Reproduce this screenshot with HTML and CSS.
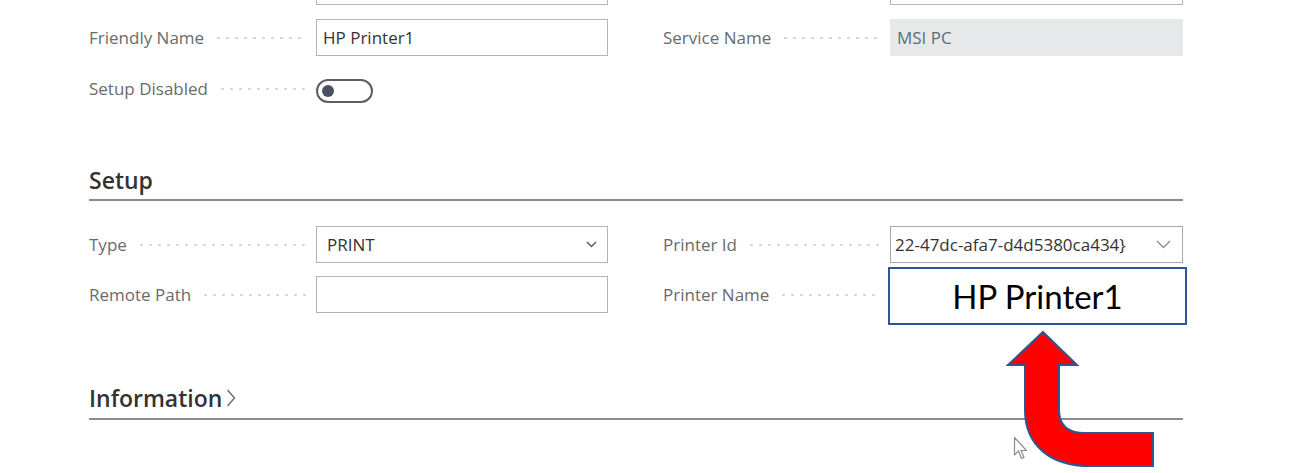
FILE: index.html
```html
<!DOCTYPE html>
<html lang="en">
<head>
  <meta charset="UTF-8">
  <title>Printer Setup</title>
  <link rel="stylesheet" href="styles.css">
</head>
<body>
  <main class="page">

    <section class="group group-general">
      <div class="grid">
        <div class="field">
          <span class="lbl"></span>
          <div class="box"></div>
        </div>
        <div class="field">
          <span class="lbl"></span>
          <div class="box"></div>
        </div>
        <div class="field">
          <span class="lbl">Friendly Name<i class="dots"></i></span>
          <div class="box">HP Printer1</div>
        </div>
        <div class="field">
          <span class="lbl">Service Name<i class="dots"></i></span>
          <div class="box box-readonly">MSI PC</div>
        </div>
        <div class="field">
          <span class="lbl">Setup Disabled<i class="dots"></i></span>
          <div class="toggle"><span class="knob"></span></div>
        </div>
      </div>
    </section>

    <section class="group">
      <h3 class="section-head">Setup</h3>
      <div class="grid">
        <div class="field">
          <span class="lbl">Type<i class="dots"></i></span>
          <div class="box box-select">
            <span>PRINT</span>
            <svg class="chev" width="11" height="7" viewBox="0 0 11 7"><path d="M1 1l4.5 4.5L10 1" fill="none" stroke="#555" stroke-width="1.4"/></svg>
          </div>
        </div>
        <div class="field">
          <span class="lbl">Printer Id<i class="dots"></i></span>
          <div class="box box-select box-id">
            <span>22-47dc-afa7-d4d5380ca434}</span>
            <svg class="chev chev-lg" width="15" height="9" viewBox="0 0 15 9"><path d="M1 1l6.5 6.5L14 1" fill="none" stroke="#8a8a8a" stroke-width="1.3"/></svg>
          </div>
        </div>
        <div class="field">
          <span class="lbl">Remote Path<i class="dots"></i></span>
          <div class="box"></div>
        </div>
        <div class="field">
          <span class="lbl">Printer Name<i class="dots"></i></span>
          <div class="box anchor">
            <div class="callout">HP Printer1</div>
          </div>
        </div>
      </div>
    </section>

    <section class="group">
      <h3 class="section-head">Information
        <svg class="head-chev" width="10" height="20" viewBox="0 0 10 20"><path d="M1.5 2l7 8-7 8" fill="none" stroke="#666" stroke-width="1.3"/></svg>
      </h3>
    </section>

    <!-- annotation arrow -->
    <svg class="arrow" width="160" height="150" viewBox="1000 328 160 150">
      <path d="M1043 332 L1077 365 L1059 365 L1059 410 C1059 425 1068 433 1085 433 L1153 433 L1153 466 L1090 466 C1050 466 1025 445 1025 410 L1025 365 L1008 365 Z"
            fill="#ff0000" stroke="#2f5597" stroke-width="2" stroke-linejoin="miter"/>
    </svg>

    <svg class="cursor" width="16" height="26" viewBox="0 0 16 26">
      <path d="M1.5 1.5 L1.5 19 L5.5 15 L8.5 22.5 L11 21.5 L8 14.5 L13.5 14.5 Z" fill="#fff" stroke="#8c8c8c" stroke-width="1.2" stroke-linejoin="round"/>
    </svg>

  </main>
</body>
</html>
```

FILE: styles.css
```css
html, body { margin: 0; padding: 0; background: #fff; overflow: hidden; }
body { font-family: "Open Sans", "Noto Sans", sans-serif; color: #333; }

.page {
  position: relative;
  display: flow-root;
  width: 1296px;
  height: 473px;
  padding: 0 0 0 89px;
  box-sizing: border-box;
}

.group-general { margin-top: -32px; }

.grid {
  display: grid;
  grid-template-columns: 519px 520px;
  column-gap: 55px;
  row-gap: 14px;
  width: 1094px;
}
.group + .group .grid { row-gap: 13px; margin-top: 25px; }

.field {
  display: grid;
  grid-template-columns: 227px 1fr;
  align-items: center;
  height: 37px;
}

.lbl {
  display: flex;
  align-items: center;
  font-size: 17px;
  color: #6a6a6a;
  padding-right: 10px;
  white-space: nowrap;
}
.dots {
  flex: 1;
  height: 4px;
  margin-left: 10px;
  background-image: radial-gradient(circle, #cfcfcf 1px, transparent 1.4px);
  background-size: 9px 4px;
  background-repeat: repeat-x;
  background-position: left center;
}

.box {
  height: 37px;
  box-sizing: border-box;
  border: 1px solid #b4b4b4;
  background: #fff;
  padding: 0 6px;
  font-size: 17px;
  color: #333;
  display: flex;
  align-items: center;
}
.box-readonly {
  background: #e6e8ea;
  border-color: #e6e8ea;
  color: #5c6d79;
}
.box-select { justify-content: space-between; padding: 0 10px 0 10px; }
.box-id { padding-left: 4px; border-color: #a2a9ae; }
.box-id .chev-lg { margin-right: 1px; }

.toggle {
  width: 57px;
  height: 24px;
  box-sizing: border-box;
  border: 2px solid #5e5e5e;
  border-radius: 12px;
  display: flex;
  align-items: center;
  padding-left: 4px;
  margin-top: 4px;
}
.knob {
  width: 12px;
  height: 12px;
  border-radius: 50%;
  background: #4a5163;
}

.section-head {
  width: 1094px;
  margin: 58px 0 0;
  padding-bottom: 4px;
  font-size: 23px;
  line-height: 30px;
  font-weight: 600;
  color: #333;
  border-bottom: 2px solid #8c8c8c;
  display: flex;
  align-items: center;
}
.group:last-of-type .section-head { margin-top: 70px; padding-bottom: 5px; }
.head-chev { margin-left: 4px; }

.anchor { position: relative; }
.callout {
  position: absolute;
  left: -3px;
  top: -10px;
  width: 299px;
  height: 58px;
  box-sizing: border-box;
  border: 2px solid #2f5597;
  background: #fff;
  display: flex;
  align-items: center;
  justify-content: center;
  font-family: Lato, "Open Sans", sans-serif;
  font-size: 33px;
  color: #000;
}

.arrow { position: absolute; left: 1000px; top: 328px; }
.cursor { position: absolute; left: 1013px; top: 436px; }
```
